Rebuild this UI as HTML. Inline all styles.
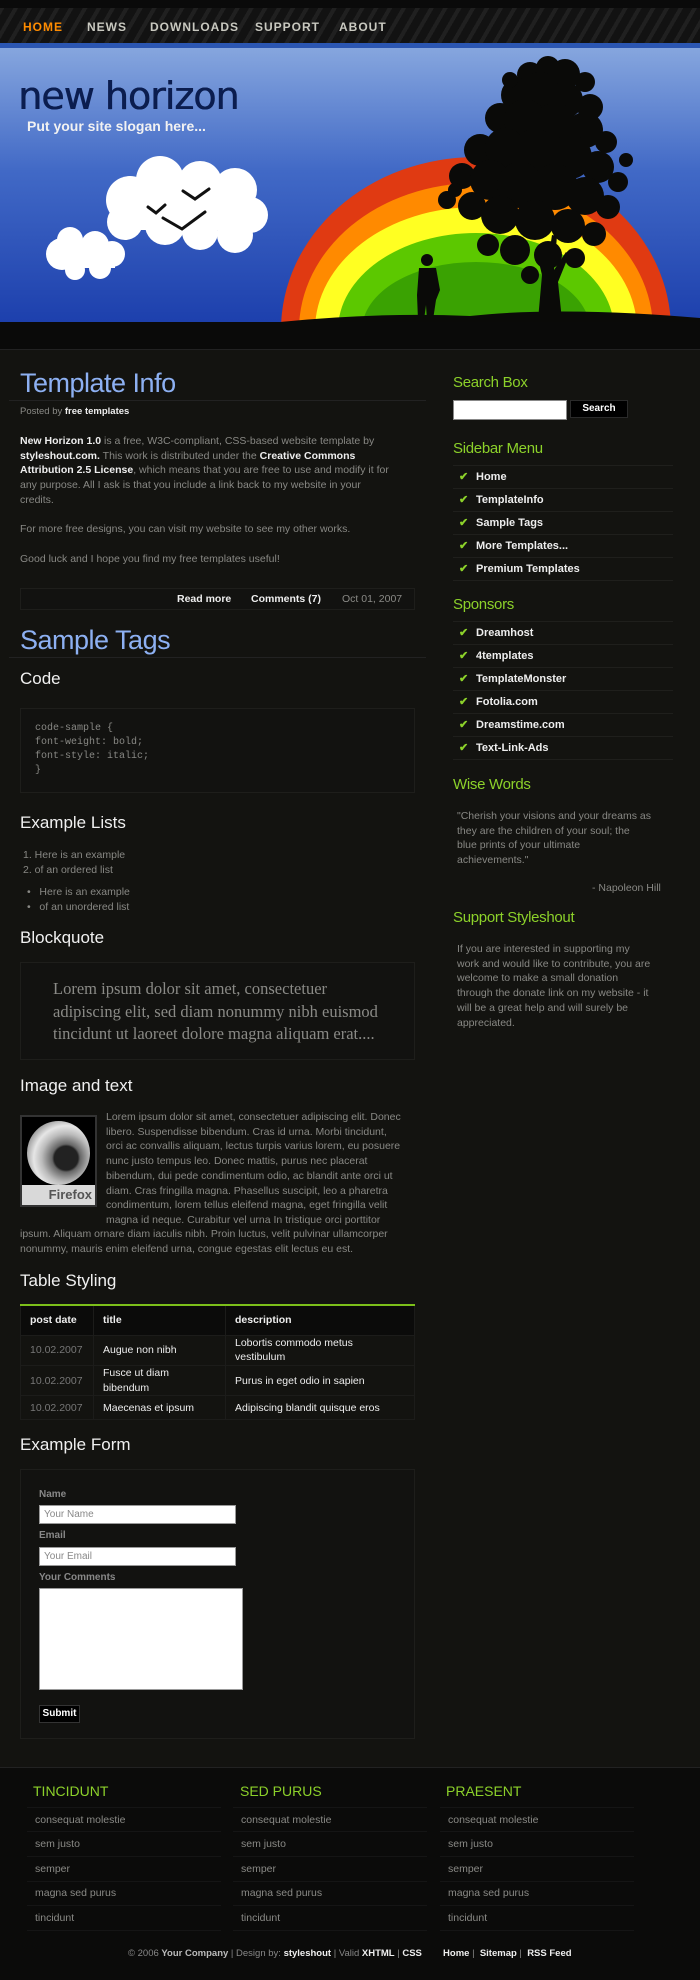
<!DOCTYPE html>
<html><head><meta charset="utf-8">
<style>
*{margin:0;padding:0;box-sizing:border-box}
body{width:700px;height:1980px;background:#131310;font-family:"Liberation Sans",sans-serif;position:relative;overflow:hidden;color:#8a8a86;font-size:11px}
.a{position:absolute;white-space:nowrap}
.nav{position:absolute;left:0;top:0;width:700px;height:48px;background:repeating-linear-gradient(-60deg,#121212 0 8px,#202020 8px 12px);border-bottom:5px solid #2b56b2;border-top:8px solid #0a0a0a}
.nav span{position:absolute;top:12px;font-size:12px;font-weight:bold;letter-spacing:1px;color:#c9c9c0}
.h2{font-size:27px;color:#8db0f2;letter-spacing:-0.5px}
.h3{font-size:17px;color:#f0f0f0}
.p{line-height:14.7px;font-size:10.5px;color:#888884}
.p b{color:#eee}
.line{position:absolute;height:1px;background:#222}
.sh{font-size:15px;color:#8cd12a;letter-spacing:-0.3px}
.li{position:absolute;left:453px;width:220px;height:23px;border-bottom:1px solid #1f1f1c;font-size:11px;font-weight:bold;color:#eee;padding-left:23px;line-height:22px}
.li:before{content:"✔";position:absolute;left:6px;color:#8cd12a;font-size:11px}
.box{position:absolute;border:1px solid #1e1e1b;background:#121210}
.fh{font-size:14px;color:#8cd12a}
.fi{position:absolute;width:194px;height:25px;border-bottom:1px solid #151515;font-size:10.5px;color:#8a8a86;padding-left:8px;line-height:24px}
td{border:1px solid #1c1c1a;padding:0 9px;font-size:10.5px;color:#eee}
</style></head><body>
<div class="nav">
<span style="left:23px;color:#ff8c00">HOME</span>
<span style="left:87px">NEWS</span>
<span style="left:150px">DOWNLOADS</span>
<span style="left:255px">SUPPORT</span>
<span style="left:339px">ABOUT</span>
</div>
<svg class="a" style="left:0;top:48px" width="700" height="274" viewBox="0 48 700 274">
<defs><linearGradient id="sky" x1="0" y1="0" x2="0" y2="1"><stop offset="0" stop-color="#86a6de"/><stop offset="0.45" stop-color="#4169c6"/><stop offset="1" stop-color="#1d40ad"/></linearGradient>
<clipPath id="cl"><rect x="0" y="48" width="700" height="274"/></clipPath></defs>
<rect x="0" y="48" width="700" height="274" fill="url(#sky)"/>
<g clip-path="url(#cl)">
<ellipse cx="476" cy="330" rx="195" ry="173" fill="#e03a12"/>
<ellipse cx="476" cy="330" rx="177" ry="147" fill="#ff8a00"/>
<ellipse cx="476" cy="330" rx="161" ry="123" fill="#ffff22"/>
<ellipse cx="476" cy="330" rx="138" ry="97" fill="#5cc800"/>
<ellipse cx="476" cy="330" rx="114" ry="68" fill="#3aa202"/>
</g>
<g fill="#fff">
<circle cx="130" cy="200" r="24"/><circle cx="160" cy="180" r="24"/><circle cx="200" cy="183" r="22"/><circle cx="235" cy="190" r="22"/><circle cx="250" cy="215" r="18"/><circle cx="235" cy="235" r="18"/><circle cx="200" cy="232" r="18"/><circle cx="165" cy="225" r="20"/><circle cx="125" cy="222" r="18"/><rect x="125" y="185" width="120" height="45"/>
<circle cx="62" cy="254" r="16"/><circle cx="70" cy="240" r="13"/><circle cx="95" cy="245" r="14"/><circle cx="112" cy="254" r="13"/><circle cx="100" cy="268" r="11"/><circle cx="75" cy="270" r="10"/><rect x="55" y="244" width="60" height="24"/>
</g>
<g fill="none" stroke="#111" stroke-width="3" stroke-linecap="round">
<path d="M183 191 L195 199 L209 189"/><path d="M148 207 L156 213 L165 205"/><path d="M163 218 L182 229 L205 212"/>
</g>
<g fill="#0a0a08">
<circle cx="530" cy="75" r="13"/><circle cx="548" cy="68" r="12"/><circle cx="565" cy="74" r="15"/><circle cx="585" cy="82" r="10"/><circle cx="518" cy="95" r="17"/><circle cx="540" cy="92" r="20"/><circle cx="565" cy="100" r="18"/><circle cx="590" cy="107" r="13"/><circle cx="500" cy="118" r="15"/><circle cx="525" cy="120" r="21"/><circle cx="555" cy="125" r="22"/><circle cx="585" cy="130" r="18"/><circle cx="606" cy="142" r="11"/><circle cx="480" cy="150" r="16"/><circle cx="505" cy="148" r="20"/><circle cx="535" cy="152" r="23"/><circle cx="570" cy="157" r="22"/><circle cx="598" cy="167" r="16"/><circle cx="618" cy="182" r="10"/><circle cx="462" cy="176" r="13"/><circle cx="490" cy="180" r="20"/><circle cx="520" cy="185" r="23"/><circle cx="555" cy="187" r="23"/><circle cx="585" cy="196" r="19"/><circle cx="608" cy="207" r="12"/><circle cx="447" cy="200" r="9"/><circle cx="472" cy="206" r="14"/><circle cx="500" cy="215" r="19"/><circle cx="535" cy="220" r="20"/><circle cx="568" cy="226" r="17"/><circle cx="594" cy="234" r="12"/><circle cx="488" cy="245" r="11"/><circle cx="515" cy="250" r="15"/><circle cx="548" cy="255" r="14"/><circle cx="575" cy="258" r="10"/><circle cx="530" cy="275" r="9"/><circle cx="455" cy="190" r="7"/><circle cx="626" cy="160" r="7"/><circle cx="510" cy="80" r="8"/>
<path d="M538 320 L542 275 L536 250 L540 248 L547 268 L552 235 L557 236 L554 270 L566 252 L569 255 L558 282 L562 320 Z"/>
<path d="M280 322 Q380 312 470 316 Q560 306 700 318 L700 322Z"/>
<circle cx="427" cy="260" r="6"/><path d="M419 268 L436 268 L440 290 L436 300 L433 320 L427 320 L426 305 L424 320 L418 320 L417 295 Z"/>
</g>
</svg>
<div class="a" style="left:18px;top:74px;font-size:38px;color:#0b1d4f;letter-spacing:-1px;font-family:'DejaVu Sans',sans-serif;text-shadow:0.6px 0 0 #0b1d4f">new horizon</div>
<div class="a" style="left:27px;top:118px;font-size:14px;font-weight:bold;color:#f2f2f2">Put your site slogan here...</div>
<div class="a" style="left:0;top:322px;width:700px;height:28px;background:#0a0a09;border-bottom:1px solid #222"></div>

<!-- Left column -->
<div class="a h2" style="left:20px;top:368px">Template Info</div>
<div class="line" style="left:9px;top:400px;width:417px"></div>
<div class="a" style="left:20px;top:406px;font-size:9.5px">Posted by <b style="color:#eee">free templates</b></div>
<div class="a p" style="left:20px;top:434px"><b>New Horizon 1.0</b> is a free, W3C-compliant, CSS-based website template by<br><b>styleshout.com.</b> This work is distributed under the <b>Creative Commons</b><br><b>Attribution 2.5 License</b>, which means that you are free to use and modify it for<br>any purpose. All I ask is that you include a link back to my website in your<br>credits.<br><br>For more free designs, you can visit my website to see my other works.<br><br>Good luck and I hope you find my free templates useful!</div>
<div class="box" style="left:20px;top:588px;width:395px;height:22px;background:#121210"></div>
<div class="a" style="left:177px;top:593px;font-size:10.5px;color:#eee;font-weight:bold">Read more</div>
<div class="a" style="left:251px;top:593px;font-size:10.5px;color:#eee;font-weight:bold">Comments (7)</div>
<div class="a" style="left:342px;top:593px;font-size:10.5px">Oct 01, 2007</div>

<div class="a h2" style="left:20px;top:625px">Sample Tags</div>
<div class="line" style="left:9px;top:657px;width:417px"></div>
<div class="a h3" style="left:20px;top:669px">Code</div>
<div class="box" style="left:20px;top:708px;width:395px;height:85px"></div>
<div class="a p" style="left:35px;top:722px;font-family:'Liberation Mono',monospace;font-size:10px;line-height:14px">code-sample {<br>font-weight: bold;<br>font-style: italic;<br>}</div>
<div class="a h3" style="left:20px;top:813px">Example Lists</div>
<div class="a p" style="left:23px;top:848px">1. Here is an example<br>2. of an ordered list</div>
<div class="a p" style="left:27px;top:885px">•&nbsp;&nbsp; Here is an example<br>•&nbsp;&nbsp; of an unordered list</div>
<div class="a h3" style="left:20px;top:928px">Blockquote</div>
<div class="box" style="left:20px;top:962px;width:395px;height:98px"></div>
<div class="a" style="left:53px;top:978px;font-family:'Liberation Serif',serif;font-size:16.5px;line-height:22.5px;color:#8a8a86">Lorem ipsum dolor sit amet, consectetuer<br>adipiscing elit, sed diam nonummy nibh euismod<br>tincidunt ut laoreet dolore magna aliquam erat....</div>

<div class="a h3" style="left:20px;top:1076px">Image and text</div>
<div class="a" style="left:20px;top:1115px;width:77px;height:92px;border:2px solid #333;background:#000">
<div style="position:absolute;left:5px;top:4px;width:63px;height:64px;border-radius:50%;background:radial-gradient(circle at 62% 58%,#222 0 22%,#666 26%,#bbb 45%,#e6e6e6 60%,#888 80%,#333 100%)"></div>
<div style="position:absolute;left:0;bottom:0;width:73px;height:20px;background:#d9d9d9;color:#555;font-weight:bold;font-size:13px;text-align:right;padding-right:3px;line-height:20px">Firefox</div></div>
<div class="a p" style="left:106px;top:1110px">Lorem ipsum dolor sit amet, consectetuer adipiscing elit. Donec<br>libero. Suspendisse bibendum. Cras id urna. Morbi tincidunt,<br>orci ac convallis aliquam, lectus turpis varius lorem, eu posuere<br>nunc justo tempus leo. Donec mattis, purus nec placerat<br>bibendum, dui pede condimentum odio, ac blandit ante orci ut<br>diam. Cras fringilla magna. Phasellus suscipit, leo a pharetra<br>condimentum, lorem tellus eleifend magna, eget fringilla velit<br>magna id neque. Curabitur vel urna In tristique orci porttitor</div>
<div class="a p" style="left:20px;top:1227px">ipsum. Aliquam ornare diam iaculis nibh. Proin luctus, velit pulvinar ullamcorper<br>nonummy, mauris enim eleifend urna, congue egestas elit lectus eu est.</div>

<div class="a h3" style="left:20px;top:1271px">Table Styling</div>
<table class="a" style="left:20px;top:1304px;width:395px;border-collapse:collapse;border-top:2px solid #7cbf1a">
<tr style="height:30px;background:#0b0b0a"><td style="width:73px;font-weight:bold">post date</td><td style="width:132px;font-weight:bold">title</td><td style="font-weight:bold">description</td></tr>
<tr style="height:30px"><td style="color:#777">10.02.2007</td><td>Augue non nibh</td><td style="line-height:14.7px">Lobortis commodo metus<br>vestibulum</td></tr>
<tr style="height:30px"><td style="color:#777">10.02.2007</td><td style="line-height:14.7px">Fusce ut diam<br>bibendum</td><td>Purus in eget odio in sapien</td></tr>
<tr style="height:24px"><td style="color:#777">10.02.2007</td><td>Maecenas et ipsum</td><td>Adipiscing blandit quisque eros</td></tr>
</table>

<div class="a h3" style="left:20px;top:1435px">Example Form</div>
<div class="box" style="left:20px;top:1469px;width:395px;height:270px"></div>
<div class="a" style="left:39px;top:1489px;font-size:10px;font-weight:bold;color:#888">Name</div>
<div class="a" style="left:39px;top:1505px;width:197px;height:19px;background:#fff;border:1px solid #999;font-size:10px;color:#888;padding:3px 4px">Your Name</div>
<div class="a" style="left:39px;top:1530px;font-size:10px;font-weight:bold;color:#888">Email</div>
<div class="a" style="left:39px;top:1547px;width:197px;height:19px;background:#fff;border:1px solid #999;font-size:10px;color:#888;padding:3px 4px">Your Email</div>
<div class="a" style="left:39px;top:1572px;font-size:10px;font-weight:bold;color:#888">Your Comments</div>
<div class="a" style="left:39px;top:1588px;width:204px;height:102px;background:#fff;border:1px solid #999"></div>
<div class="a" style="left:39px;top:1705px;width:41px;height:18px;background:#000;border:1px solid #333;font-size:10px;font-weight:bold;color:#fff;text-align:center;line-height:16px">Submit</div>

<!-- Sidebar -->
<div class="a sh" style="left:453px;top:374px">Search Box</div>
<div class="a" style="left:453px;top:400px;width:114px;height:20px;background:#fff;border:1px solid #888"></div>
<div class="a" style="left:570px;top:400px;width:58px;height:18px;background:#000;border:1px solid #2a2a2a;color:#fff;font-weight:bold;font-size:10px;text-align:center;line-height:16px">Search</div>
<div class="a sh" style="left:453px;top:440px">Sidebar Menu</div>
<div class="line" style="left:453px;top:465px;width:220px;background:#1f1f1c"></div>
<div class="li" style="top:466px">Home</div>
<div class="li" style="top:489px">TemplateInfo</div>
<div class="li" style="top:512px">Sample Tags</div>
<div class="li" style="top:535px">More Templates...</div>
<div class="li" style="top:558px">Premium Templates</div>
<div class="a sh" style="left:453px;top:596px">Sponsors</div>
<div class="line" style="left:453px;top:621px;width:220px;background:#1f1f1c"></div>
<div class="li" style="top:622px">Dreamhost</div>
<div class="li" style="top:645px">4templates</div>
<div class="li" style="top:668px">TemplateMonster</div>
<div class="li" style="top:691px">Fotolia.com</div>
<div class="li" style="top:714px">Dreamstime.com</div>
<div class="li" style="top:737px">Text-Link-Ads</div>
<div class="a sh" style="left:453px;top:776px">Wise Words</div>
<div class="a p" style="left:457px;top:809px">"Cherish your visions and your dreams as<br>they are the children of your soul; the<br>blue prints of your ultimate<br>achievements."</div>
<div class="a p" style="left:592px;top:881px">- Napoleon Hill</div>
<div class="a sh" style="left:453px;top:909px">Support Styleshout</div>
<div class="a p" style="left:457px;top:942px">If you are interested in supporting my<br>work and would like to contribute, you are<br>welcome to make a small donation<br>through the donate link on my website - it<br>will be a great help and will surely be<br>appreciated.</div>

<!-- Footer -->
<div class="a" style="left:0;top:1767px;width:700px;height:213px;background:#0b0b0a;border-top:1px solid #222"></div>
<div class="a fh" style="left:33px;top:1783px">TINCIDUNT</div>
<div class="a fh" style="left:240px;top:1783px">SED PURUS</div>
<div class="a fh" style="left:446px;top:1783px">PRAESENT</div>
<div class="a" style="left:27px;top:1807px">
<div class="fi" style="top:0;border-top:1px solid #151515">consequat molestie</div><div class="fi" style="top:25px">sem justo</div><div class="fi" style="top:50px">semper</div><div class="fi" style="top:74px">magna sed purus</div><div class="fi" style="top:99px">tincidunt</div></div>
<div class="a" style="left:233px;top:1807px">
<div class="fi" style="top:0;border-top:1px solid #151515">consequat molestie</div><div class="fi" style="top:25px">sem justo</div><div class="fi" style="top:50px">semper</div><div class="fi" style="top:74px">magna sed purus</div><div class="fi" style="top:99px">tincidunt</div></div>
<div class="a" style="left:440px;top:1807px">
<div class="fi" style="top:0;border-top:1px solid #151515">consequat molestie</div><div class="fi" style="top:25px">sem justo</div><div class="fi" style="top:50px">semper</div><div class="fi" style="top:74px">magna sed purus</div><div class="fi" style="top:99px">tincidunt</div></div>
<div class="a" style="left:128px;top:1948px;font-size:9.5px;color:#888">© 2006 <b style="color:#bbb">Your Company</b> | Design by: <b style="color:#eee">styleshout</b> | Valid <b style="color:#eee">XHTML</b> | <b style="color:#eee">CSS</b>&nbsp;&nbsp;&nbsp;&nbsp;&nbsp;&nbsp;&nbsp;&nbsp;<b style="color:#eee">Home</b> |&nbsp; <b style="color:#eee">Sitemap</b> |&nbsp; <b style="color:#eee">RSS Feed</b></div>
</body></html>
